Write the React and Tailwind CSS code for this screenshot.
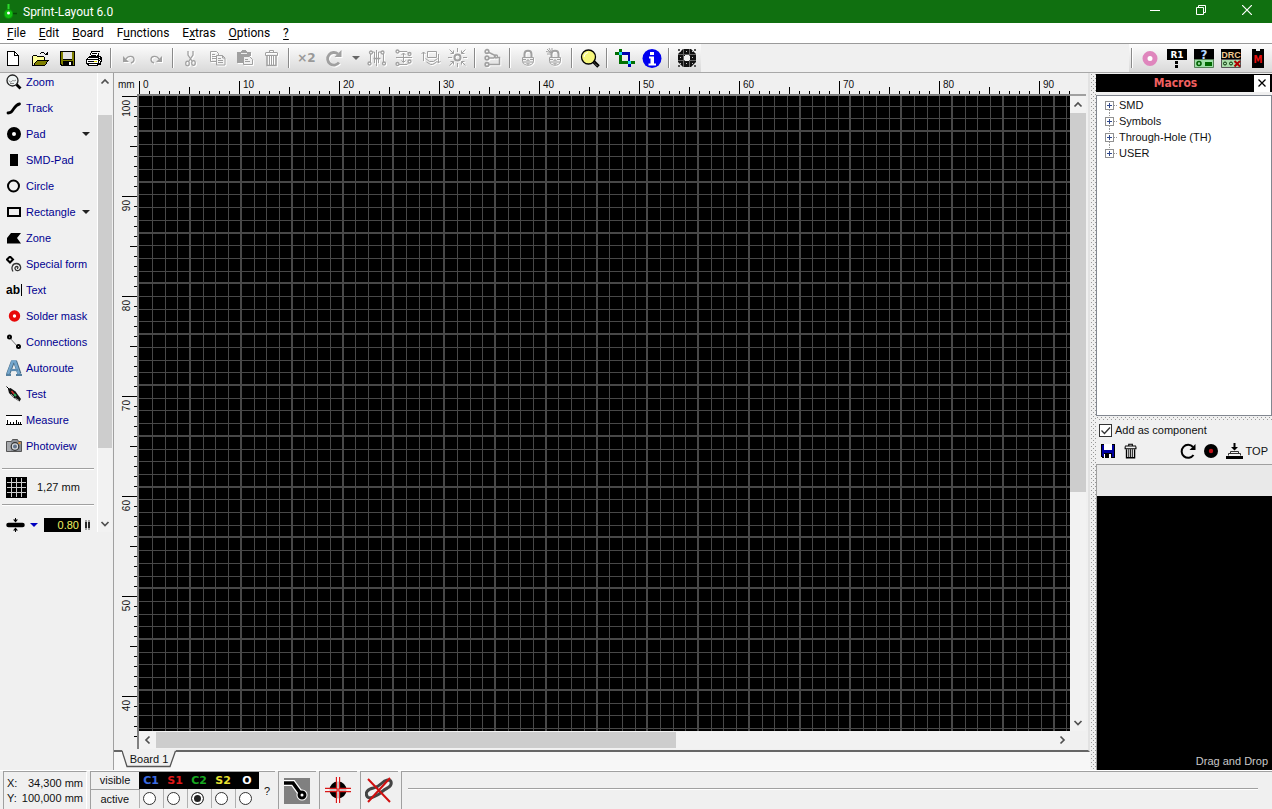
import React, { useLayoutEffect, useRef, useState } from "react";

const range = (n) => Array.from({ length: Math.max(0, n) }, (_, i) => i);

/* Measures an element so that the rulers draw only the marks that fit. */
function useSize() {
  const ref = useRef(null);
  const [size, setSize] = useState({ w: 0, h: 0 });
  useLayoutEffect(() => {
    const el = ref.current;
    const read = () => setSize({ w: el.clientWidth, h: el.clientHeight });
    read();
    const watcher = new ResizeObserver(read);
    watcher.observe(el);
    return () => watcher.disconnect();
  }, []);
  return [ref, size];
}

function Svg({ w = 20, h = 20, vw, vh, crisp, children, className = "" }) {
  return (
    <svg
      width={w}
      height={h}
      viewBox={`0 0 ${vw || w} ${vh || h}`}
      shapeRendering={crisp ? "crispEdges" : "auto"}
      className={`shrink-0 ${className}`}
      fill="none"
      stroke="none"
      aria-hidden="true"
    >
      {children}
    </svg>
  );
}

/* A disabled tool: grey strokes with a white edge below and to the right. */
function Ghost({ children }) {
  return (
    <Svg>
      <g transform="translate(1 1)" stroke="#ffffff" color="#ffffff">{children}</g>
      <g stroke="#a0a0a0" color="#a0a0a0">{children}</g>
    </Svg>
  );
}

const Solid = (p) => <path fill="currentColor" stroke="none" {...p} />;

/* ---------- toolbar icons ---------- */

const NewIcon = () => (
  <Svg crisp>
    <path d="M4 3h8l4 4v11H4z" fill="#fff" />
    <path d="M4 3h7v1H5v13h10V8h1v10H4zM11 3h1v1h1v1h1v1h1v1h1v1h-5zM12 5v2h2V6h-1V5z" fill="#000" />
  </Svg>
);
const OpenIcon = () => (
  <Svg crisp>
    <path d="M3 8h4l1 1h6v3H7l-4 5z" fill="#ffff99" />
    <path d="M7 12h11l-4 6H3z" fill="#808000" />
    <path d="M3 7h4v1H3zM2 8h1v10H2zM7 8h1v1H7zM8 8h6v1H8zM14 9h1v3h-1zM7 12h12v1H7zM6 13h1v1H6zM5 14h1v1H5zM4 15h1v2H4zM3 17h12v1H3zM17 13h1v1h-1zM16 14h1v2h-1zM15 16h1v1h-1zM11 4h3v1h-3zM10 5h1v1h-1zM14 5h1v1h-1zM15 6h3v1h-3zM17 4h1v3h-1zM16 5h1v1h-1z" fill="#000" />
  </Svg>
);
const SaveIcon = () => (
  <Svg crisp>
    <path d="M3 3h15v15H4l-1-1z" fill="#000" />
    <path d="M4 4h2v8h9V4h2v13h-1v-4H6v4H5l-1-1z" fill="#808000" />
    <path d="M6 4h9v7H6z" fill="#e4e4e4" />
    <path d="M12 14h2v3h-2z" fill="#fff" />
  </Svg>
);
const MacroSaveIcon = () => (
  <Svg crisp w={16} h={16}>
    <path d="M1 1h14v14H2l-1-1z" fill="#000" />
    <path d="M2 2h12v12H3l-1-1z" fill="#0000a0" />
    <path d="M4 1h8v6H4z" fill="#fff" />
    <path d="M4 10h8v5H4z" fill="#000" />
    <path d="M9 11h2v4H9zM4 11h1v4H4z" fill="#fff" />
  </Svg>
);
const PrintIcon = () => (
  <Svg crisp>
    <path d="M7 3h9v1h-1v4h2v1h1v5h-1v3h-3v1H4v-1H3v-1H2v-5h1v-1h1V9h1V8h1V5h1z" fill="#000" />
    <path d="M8 4h7l-2 4H6zM4 10h10v1H4zM3 12h11v3H3zM5 16h8v1H5z" fill="#fff" />
    <path d="M8 5h5v1H8zM7 7h5v1H7zM4 13h9v1H4z" fill="#000" />
    <path d="M10 13h3v1h-3z" fill="#dede00" />
    <path d="M15 11h1v1h-1zM16 12h1v1h-1zM15 13h1v2h-1zM15 9h1v1h-1z" fill="#fff" />
  </Svg>
);
const UndoIcon = () => (
  <Ghost>
    <Solid d="M4 8v6h6z" />
    <path d="M7 11c2-3.500 8-3.500 8 .5 0 2-1 3-3 3.500" strokeWidth="1.300" />
  </Ghost>
);
const RedoIcon = () => (
  <Ghost>
    <Solid d="M16 8v6h-6z" />
    <path d="M13 11c-2-3.500-8-3.500-8 .5 0 2 1 3 3 3.500" strokeWidth="1.300" />
  </Ghost>
);
const CutIcon = () => (
  <Ghost>
    <path d="M7 3v4l4 6M12 3v4L8 13" strokeWidth="1.300" />
    <ellipse cx="6.500" cy="15.500" rx="1.800" ry="2.300" strokeWidth="1.200" />
    <ellipse cx="12.500" cy="15" rx="1.800" ry="2.300" strokeWidth="1.200" />
  </Ghost>
);
const CopyIcon = () => (
  <Ghost>
    <path d="M2.500 3.500h6l2 2v8h-8zM4 6.500h3M4 8.500h4M4 10.500h4" />
    <path d="M8.500 7.500h6l2.500 2.500v7h-8.500z" fill="#f4f4f4" />
    <path d="M14.500 7.500V10H17M10 10.500h3M10 12.500h5M10 14.500h5" />
  </Ghost>
);
const PasteIcon = () => (
  <Ghost>
    <Solid d="M2 4h4V3h1V2h4v1h1v1h4v4h-6v7H2z" />
    <path d="M6 5.500h6" stroke="#eee" />
    <path d="M8.500 8.500h6l3 3v5h-9z" fill="#f0f0f0" />
    <path d="M10 11.500h3M10 13.500h5" />
  </Ghost>
);
const Trash = () => (
  <>
    <path d="M3.500 4.500h12M7.500 4V2.500h4V4M3.500 5v2.500h12V5" />
    <path d="M5 8v9.500h9V8" strokeWidth="1.500" />
    <path d="M7.500 8v9M9.500 8v9M11.500 8v9" strokeWidth="1" />
  </>
);
const RotateGhost = () => (
  <Ghost>
    <path d="M15 14.500A6.300 6.300 0 1 1 14 6" strokeWidth="2.800" />
    <Solid d="M10.500 9l7-7v7z" />
  </Ghost>
);
const MirrorH = () => (
  <Ghost>
    <path d="M9.500 2v16M3.500 6v8M5.500 4h2v11M16.500 6v8M14 4h-2.500v11" />
    <path d="M6.500 10.500h7" strokeWidth="1.500" />
    <circle cx="2.500" cy="15.500" r="1.500" strokeWidth="1.300" />
    <circle cx="4" cy="4.500" r="1.500" strokeWidth="1.300" />
    <circle cx="15.500" cy="4.500" r="1.500" strokeWidth="1.300" />
    <circle cx="17" cy="15.500" r="1.500" strokeWidth="1.300" />
  </Ghost>
);
const MirrorV = () => (
  <Ghost>
    <path d="M2 9.500h16" />
    <path d="M5 3.500h8l2 2M5 16.500h8l2-2M9.500 5v9M7.500 7L9.500 5l2 2M7.500 12.500l2 2 2-2" />
    <circle cx="3.500" cy="3.500" r="1.500" strokeWidth="1.300" />
    <circle cx="15.500" cy="6" r="1.500" strokeWidth="1.300" />
    <circle cx="3.500" cy="16" r="1.500" strokeWidth="1.300" />
    <circle cx="15.500" cy="13.500" r="1.500" strokeWidth="1.300" />
  </Ghost>
);
const SwapSide = () => (
  <Ghost>
    <path d="M6.500 3.500h9v6h-9zM2.500 13V4M.5 6l2-2 2 2M17.500 6v9M15.500 13l2 2 2-2" />
    <path d="M4.500 10.500l4 3h4l4-3M5.500 14l4 2.500h2l4-2.500" />
  </Ghost>
);
const SnapGrid = () => (
  <Ghost>
    <circle cx="9.500" cy="9.500" r="3" strokeWidth="2" />
    <path d="M9.500 0v4M9.500 15v4M0 9.500h4M15 9.500h4M1.500 1.500l4 4M17.500 1.500l-4 4M1.500 17.500l4-4M17.500 17.500l-4-4M2.500 5.500h3v-3M16.500 5.500h-3v-3M2.500 13.500h3v3M16.500 13.500h-3v3" />
  </Ghost>
);
const NetGhost = () => (
  <Ghost>
    <path d="M5 4l8 4M5 10h5.500l2-1.500M5 16.500h11.500V9.500H14" strokeWidth="1.500" />
    <circle cx="4" cy="3.500" r="1.800" strokeWidth="1.700" />
    <circle cx="4" cy="10" r="1.800" strokeWidth="1.700" />
    <circle cx="4" cy="16.500" r="1.800" strokeWidth="1.700" />
    <circle cx="13" cy="8.500" r="1.500" strokeWidth="1.500" />
  </Ghost>
);
const LockGhost = ({ rays }) => (
  <Ghost>
    <path d="M6.500 9V6c0-4.500 7-4.500 7 0v3" strokeWidth="2" />
    <path d="M4.500 9.500h11v4c-1 5-10 5-11 0z" fill="#f2f2f2" />
    <path d="M5 11.500h3M12 11.500h3M5 14h3M12 14h3M9 12h2v4H9z" />
    {rays && <path d="M2 1l4 4M2 6h4M7 0v4M1 3.500l5 1M4 0l2 4" />}
  </Ghost>
);
const MagnifierIcon = () => (
  <Svg>
    <path d="M12.500 12.500l6 6" stroke="#000" strokeWidth="3.500" />
    <path d="M14 14.500l4 4" stroke="#bbb" strokeWidth="1" strokeDasharray="1 1" />
    <circle cx="8.500" cy="9" r="7" fill="#f6f67c" stroke="#000" strokeWidth="1.300" />
    <path d="M4 9a5 5 0 0 1 4-4.500" stroke="#fff" strokeWidth="1" />
  </Svg>
);
const CropIcon = () => (
  <Svg crisp>
    <path d="M4 1h3v12h6v3H4z" fill="#007000" />
    <path d="M0 4h4v3H0zM16 13h4v3h-4z" fill="#007000" />
    <path d="M7 4h8v9h-2V7H7zM13 16h3v3h-3z" fill="#0000b0" />
    <path d="M4 4h3v3H4zM13 13h3v3h-3z" fill="#20d8f0" />
  </Svg>
);
const InfoIcon = () => (
  <Svg>
    <circle cx="10" cy="10.500" r="9.500" fill="#0000f0" />
    <path d="M8 4h4v3H8zM7 8.500h5v7h2v2H6.500v-2h2v-5H7z" fill="#fff" />
  </Svg>
);
const MeshIcon = () => (
  <Svg>
    <path d="M6 1h8l5 5v8l-5 5H6l-5-5V6z" fill="#111" />
    <path d="M1 1h2v2H1zM17 1h2v2h-2zM1 17h2v2H1zM17 17h2v2h-2z" fill="#555" />
    <g stroke="#c8c8c8" strokeWidth="1" strokeDasharray="1 2" shapeRendering="crispEdges">
      {[3, 6, 9, 12, 15].map((v) => (
        <path key={v} d={`M3 ${v}.500h14`} />
      ))}
    </g>
    <path d="M1 6.500h18M1 12.500h18M6.500 1v18M12.500 1v18" stroke="#666" strokeWidth="1" shapeRendering="crispEdges" />
    <path d="M8 7h4v1h1v4h-1v1H8v-1H7V8h1z" fill="#f4f4f4" />
  </Svg>
);

/* ---------- right toolbar icons ---------- */

const PinkPad = () => (
  <Svg>
    <circle cx="10" cy="10.500" r="5" stroke="#df86bd" strokeWidth="5" fill="#fff" />
  </Svg>
);
const R1Icon = () => (
  <Svg>
    <path d="M0 1h20v11H0z" fill="#000" />
    <text x="10" y="10" textAnchor="middle" fontSize="9" fontWeight="700" fill="#fff" className="font-[DejaVu_Sans]">R1</text>
    <path d="M8 13h3v3H8zM8 17h3v3H8z" fill="#000" />
  </Svg>
);
const QueryIcon = () => (
  <Svg>
    <path d="M0 1h20v11H0z" fill="#000" />
    <text x="10" y="11" textAnchor="middle" fontSize="12" fontWeight="700" fill="#b8d8ff" className="font-[DejaVu_Sans]">?</text>
    <path d="M.5 11.500h19v8H.5z" fill="#9fe0a8" stroke="#568058" />
    <circle cx="5" cy="15.500" r="2" stroke="#006000" strokeWidth="1.600" />
    <path d="M11 14h7v4h-7z" fill="#006a00" />
  </Svg>
);
const DrcIcon = () => (
  <Svg>
    <path d="M0 1h20v11H0z" fill="#000" />
    <text x="10" y="10" textAnchor="middle" fontSize="9" fontWeight="700" fill="#efc890" className="font-[Liberation_Sans]">DRC</text>
    <path d="M.5 11.500h19v8H.5z" fill="#a8dca8" stroke="#555" />
    <circle cx="4" cy="15.500" r="1.500" stroke="#003000" />
    <circle cx="10" cy="15.500" r="1.500" stroke="#003000" />
    <path d="M13.500 13l5.500 5.500M19 13l-5.500 5.500" stroke="#b00000" strokeWidth="2" />
  </Svg>
);
const MacroIcon = () => (
  <Svg>
    <path d="M4 1h4v2h4V1h4v19H4z" fill="#000" />
    <text x="10" y="15" textAnchor="middle" fontSize="10" fontWeight="700" fill="#e81010" className="font-[DejaVu_Sans_Condensed]">M</text>
  </Svg>
);

/* ---------- left tool icons (16 x 16) ---------- */

const T = (p) => <Svg w={16} h={16} {...p} />;
const toolIcons = {
  Zoom: (
    <T>
      <path d="M10 10l4.500 4.500" stroke="#000" strokeWidth="2.800" />
      <circle cx="6.500" cy="6.500" r="5.500" fill="#eef3f3" stroke="#222" strokeWidth="1.300" />
      <path d="M3 6.500c1 2 2 2 3 .5s2 1 4-1M4 9.500h4" stroke="#888" />
    </T>
  ),
  Track: <T><path d="M2 13c3 0 3.500-1 5.500-4S10.500 4.500 13.500 4" stroke="#000" strokeWidth="2.800" strokeLinecap="round" strokeLinejoin="round" /></T>,
  Pad: <T><circle cx="8" cy="8" r="4.500" stroke="#000" strokeWidth="5" fill="#fff" /></T>,
  "SMD-Pad": <T crisp><path d="M4 2h8v12H4z" fill="#000" /></T>,
  Circle: <T><circle cx="7.500" cy="8" r="5.500" stroke="#000" strokeWidth="2" /></T>,
  Rectangle: <T crisp><path d="M1 3h14v10H1zM3 5v6h10V5z" fill="#000" fillRule="evenodd" /></T>,
  Zone: <T><path d="M5 3h10l-4 5 4 5.500H1V8z" fill="#000" /></T>,
  "Special form": (
    <T>
      <path d="M4 .5L7 3.500 4 6.500 1 3.500z" stroke="#000" strokeWidth="2" />
      <path d="M7 15.500c-2-3-1-8 3.500-8s5.500 6 2 7-5-4-1.500-4c1.500 0 1 2 0 2" stroke="#333" strokeWidth="1.300" />
    </T>
  ),
  Text: (
    <T>
      <text x="0" y="12" fontSize="12" fontWeight="700" fill="#000" className="font-[Liberation_Sans]">ab</text>
      <path d="M15.500 2v12" stroke="#000" strokeWidth="1" />
    </T>
  ),
  "Solder mask": <T><circle cx="8.500" cy="8" r="3.700" stroke="#e80808" strokeWidth="4" fill="#fff" /></T>,
  Connections: (
    <T>
      <path d="M3 3l9 10" stroke="#777" />
      <circle cx="3.500" cy="3" r="1.500" stroke="#000" strokeWidth="2" fill="#fff" />
      <circle cx="12.500" cy="12.500" r="1.500" stroke="#000" strokeWidth="2" fill="#fff" />
    </T>
  ),
  Autoroute: (
    <T>
      <path d="M2 14.500L6.500 2.500l3 0L13.500 14" stroke="#466a84" strokeWidth="4" />
      <path d="M2 14L6.500 1.500h2.500L13 14" stroke="#74a6cc" strokeWidth="2.600" />
      <path d="M4 10h8" stroke="#5d8cb0" strokeWidth="2.200" />
      <path d="M0 14h5v2H0zM10 14h6v2h-6z" fill="#5580a0" />
    </T>
  ),
  Test: (
    <T>
      <path d="M.5.5l3 3" stroke="#000" />
      <path d="M2 3l2.500-1 5 3.500L15 13l-1.500 2.500L8 12 3 7z" fill="#111" />
      <path d="M5.500 5l2.500 3" stroke="#d03030" strokeWidth="1.500" />
      <path d="M8 8l2 2" stroke="#30b060" strokeWidth="2" />
      <path d="M9 12l4 2.500M5 8l3 3" stroke="#999" />
    </T>
  ),
  Measure: (
    <T crisp>
      <path d="M0 3h16v10H0z" fill="#fff" />
      <path d="M0 3h16v1H0zM0 12h16v1H0zM1 8h1v4H1zM4 10h1v2H4zM7 10h1v2H7zM10 8h1v4h-1zM12 10h1v2h-1zM14 10h1v2h-1z" fill="#000" />
    </T>
  ),
  Photoview: (
    <T>
      <path d="M.5 3.500h5l1-2h5l1 2h3v10H.5z" fill="#8b8f96" stroke="#555" />
      <path d="M2 4v9M4 4v9" stroke="#c4c4c4" />
      <circle cx="9" cy="8.500" r="3.800" fill="#d7dade" stroke="#333" strokeWidth="1.200" />
      <circle cx="9" cy="8.500" r="2" fill="#64748a" />
      <path d="M12.500 4h2v2h-2z" fill="#e09030" />
    </T>
  ),
};

const tools = [
  ["Zoom"], ["Track"], ["Pad", true], ["SMD-Pad"], ["Circle"], ["Rectangle", true], ["Zone"], ["Special form"],
  ["Text"], ["Solder mask"], ["Connections"], ["Autoroute"], ["Test"], ["Measure"], ["Photoview"],
];

const Caret = ({ color = "#222" }) => (
  <Svg w={8} h={4}><path d="M0 0h8L4 4z" fill={color} /></Svg>
);

const Chevron = ({ dir }) => {
  const d = { up: "M1.500 6.500L5 3l3.500 3.500", down: "M1.500 3l3.500 3.500L8.500 3", left: "M6.500 1.500L3 5l3.500 3.500", right: "M3.500 1.500L7 5 3.500 8.500" }[dir];
  return <Svg w={10} h={10}><path d={d} stroke="#505050" strokeWidth="1.700" /></Svg>;
};

function ScrollButton({ dir, label, className = "" }) {
  return (
    <button type="button" aria-label={label} className={`flex shrink-0 items-center justify-center ${className}`}>
      <Chevron dir={dir} />
    </button>
  );
}

/* ---------- frame ---------- */

function TitleBar() {
  return (
    <header className="flex h-[23px] shrink-0 items-center bg-[#107010] text-white">
      <Svg w={20} h={22} className="mr-[3px]">
        <path d="M8.500 3v6" stroke="#2cdc2c" strokeWidth="2" />
        <circle cx="8.500" cy="13" r="4.500" fill="#10c010" stroke="#0a8a0a" />
        <circle cx="8.500" cy="12" r="1.500" fill="#fff" />
        <path d="M13 12.500h4" stroke="#064806" strokeWidth="1.500" />
      </Svg>
      <h1 className="font-[Roboto,sans-serif] text-[12px]">Sprint-Layout 6.0</h1>
      <div className="ml-auto flex h-full gap-[1px] pr-[3px] pb-[3px]">
        <button type="button" aria-label="Minimize" className="flex w-[45px] items-center justify-center">
          <Svg w={10} h={10} crisp><path d="M0 5h10v1H0z" fill="#fff" /></Svg>
        </button>
        <button type="button" aria-label="Restore" className="flex w-[45px] items-center justify-center">
          <Svg w={10} h={10}><path d="M.5 2.500h7v7h-7zM2.500 2V.5h7v7H8" stroke="#fff" /></Svg>
        </button>
        <button type="button" aria-label="Close" className="flex w-[45px] items-center justify-center">
          <Svg w={10} h={10}><path d="M0 0l10 10M10 0L0 10" stroke="#fff" strokeWidth="1.200" /></Svg>
        </button>
      </div>
    </header>
  );
}

const menus = [["", "F", "ile"], ["", "E", "dit"], ["", "B", "oard"], ["F", "u", "nctions"], ["E", "x", "tras"], ["", "O", "ptions"], ["", "?", ""]];

function MenuBar() {
  return (
    <nav className="flex h-5 shrink-0 items-center gap-[13px] bg-white pl-[7px] font-[Roboto,sans-serif] text-[12px] leading-5 text-black">
      {menus.map(([a, b, c]) => (
        <button type="button" key={a + b + c}>{a}<span className="underline underline-offset-2">{b}</span>{c}</button>
      ))}
    </nav>
  );
}

const Sep = () => (
  <span className="flex w-2 shrink-0 py-1 pl-[2px]">
    <span className="w-[2px] border-r border-l border-r-white border-l-[#8a8a8a]" />
  </span>
);

const Tool = ({ label, children, off }) => (
  <button type="button" aria-label={label} disabled={off} className="flex w-[27px] shrink-0 items-center justify-center pr-[2px]">
    {children}
  </button>
);

const barClass = "flex bg-linear-to-b from-[#fdfdfd] to-[#d9d9d9]";

function Toolbar() {
  return (
    <div className="flex h-[30px] shrink-0 justify-between border-t border-b border-t-[#9a9a9a] border-b-[#a8a8a8] bg-[#f0f0f0]">
      <div className={barClass}>
        <Tool label="New"><NewIcon /></Tool>
        <Tool label="Open"><OpenIcon /></Tool>
        <Tool label="Save"><SaveIcon /></Tool>
        <Tool label="Print"><PrintIcon /></Tool>
        <Sep />
        <Tool label="Undo" off><UndoIcon /></Tool>
        <Tool label="Redo" off><RedoIcon /></Tool>
        <Sep />
        <Tool label="Cut" off><CutIcon /></Tool>
        <Tool label="Copy" off><CopyIcon /></Tool>
        <Tool label="Paste" off><PasteIcon /></Tool>
        <Tool label="Delete" off><Ghost><Trash /></Ghost></Tool>
        <Sep />
        <button type="button" disabled className="w-[27px] shrink-0 pr-[2px] text-center font-[DejaVu_Sans,sans-serif] text-[12px] font-bold text-[#999]">×2</button>
        <Tool label="Rotate" off><RotateGhost /></Tool>
        <button type="button" aria-label="Rotation angle" className="flex w-4 items-center justify-center"><Caret color="#666" /></button>
        <Tool label="Mirror horizontal" off><MirrorH /></Tool>
        <Tool label="Mirror vertical" off><MirrorV /></Tool>
        <Tool label="Change board side" off><SwapSide /></Tool>
        <Tool label="Snap to grid" off><SnapGrid /></Tool>
        <Sep />
        <Tool label="Group" off><NetGhost /></Tool>
        <Sep />
        <Tool label="Lock" off><LockGhost /></Tool>
        <Tool label="Unlock" off><LockGhost rays /></Tool>
        <Sep />
        <Tool label="Zoom"><MagnifierIcon /></Tool>
        <Sep />
        <Tool label="Crop"><CropIcon /></Tool>
        <Tool label="Info"><InfoIcon /></Tool>
        <Sep />
        <Tool label="Ground plane"><MeshIcon /></Tool>
      </div>
      <div className={barClass}>
        <Sep />
        <Tool label="Solder mask"><PinkPad /></Tool>
        <Tool label="Components"><R1Icon /></Tool>
        <Tool label="Selection properties"><QueryIcon /></Tool>
        <Tool label="Design rule check"><DrcIcon /></Tool>
        <Tool label="Macros"><MacroIcon /></Tool>
      </div>
    </div>
  );
}

function Sidebar() {
  return (
    <aside className="flex shrink-0 items-start border-r border-r-[#a0a0a0]">
      <div className="w-[97px]">
        <ul className="flex flex-col gap-2">
          {tools.map(([name, more]) => (
            <li key={name} className="flex h-[18px] items-center justify-between pr-[7px]">
              <button type="button" className="flex items-center gap-1 pl-[6px] text-[#000090]">
                {toolIcons[name]}
                <span className="whitespace-nowrap">{name}</span>
              </button>
              {more && <button type="button" aria-label={`${name} shapes`} className="h-full"><Caret /></button>}
            </li>
          ))}
        </ul>
        <div className="mt-[13px] mr-[3px] ml-[2px] border-t border-b border-t-[#a0a0a0] border-b-white" />
        <button type="button" className="flex h-[34px] items-center gap-[10px] pl-[6px]">
          <Svg w={21} h={21} crisp>
            <path d="M0 0h21v21H0z" fill="#000" />
            <path d="M1 5h19v1H1zM1 10h19v1H1zM1 15h19v1H1zM5 1h1v19H5zM10 1h1v19h-1zM15 1h1v19h-1z" fill="#ccc" />
          </Svg>
          1,27 mm
        </button>
        <div className="mr-[3px] ml-[2px] border-t border-b border-t-[#a0a0a0] border-b-white" />
        <div className="mt-[11px] flex items-center pl-[6px]">
          <Svg w={20} h={16}>
            <path d="M2.500 8h14" stroke="#000" strokeWidth="4.500" strokeLinecap="round" />
            <path d="M9.500 1v3M9.500 12v3" stroke="#000" />
            <path d="M7 2.500h5l-2.500 3zM7 13.500h5l-2.500-3z" fill="#000" />
          </Svg>
          <button type="button" aria-label="Track width presets" className="ml-1"><Caret color="#0000c0" /></button>
          <input aria-label="Track width" defaultValue="0.80" className="ml-[6px] h-[14px] w-[37px] bg-black pr-[2px] text-right text-[#f0f060]" />
          <Svg w={7} h={12} className="ml-[3px]">
            <path d="M2 1v10M5 1v10" stroke="#888" strokeWidth="1.500" />
            <path d="M2 3v6M5 3v6" stroke="#000" strokeWidth="1.500" />
          </Svg>
        </div>
      </div>
      <div className="flex h-[459px] w-4 flex-col border-r border-l border-r-[#f0f0f0] border-l-white bg-[#f2f2f2]">
        <ScrollButton dir="up" label="Scroll tools up" className="h-[18px]" />
        <div className="mt-6 flex-1 bg-[#cdcdcd]" />
        <div className="h-[67px]" />
        <ScrollButton dir="down" label="Scroll tools down" className="h-[17px]" />
      </div>
    </aside>
  );
}

const tickLen = (i) => (i % 10 === 0 ? 13 : i % 5 === 0 ? 7 : 3);

function TopRuler() {
  const [ref, { w }] = useSize();
  return (
    <div ref={ref} className="min-w-0">
      <svg className="block h-full w-full" aria-hidden="true">
        {range(Math.floor((w - 2) / 10) + 1).map((i) => (
          <rect key={i} x={2 + i * 10} y={21 - tickLen(i)} width="1" height={tickLen(i)} fill="#000" />
        ))}
        {range(Math.ceil((w - 24) / 100)).map((k) => (
          <text key={k} x={6 + k * 100} y="15" fontSize="10" fill="#111">{k * 10}</text>
        ))}
      </svg>
    </div>
  );
}

function SideRuler() {
  const [ref, { h }] = useSize();
  const len = (i) => (i % 10 === 0 ? 15 : i % 5 === 0 ? 7 : 3);
  return (
    <div ref={ref} className="row-span-2 min-h-0">
      <svg className="block h-full w-full" aria-hidden="true">
        {range(Math.floor((h - 12) / 10) + 1).map((i) => (
          <rect key={i} x={23 - len(i)} y={2 + i * 10} width={len(i)} height="1" fill="#000" />
        ))}
        {range(Math.ceil((h - 26) / 100)).map((k) => {
          const y = 6 + k * 100;
          return (
            <text key={k} x="16" y={y} fontSize="10" fill="#111" textAnchor="end" transform={`rotate(-90 16 ${y})`}>{100 - k * 10}</text>
          );
        })}
      </svg>
    </div>
  );
}

function Board() {
  const pitch = 12.7;
  return (
    <svg className="block h-full w-full bg-black" shapeRendering="crispEdges" role="img" aria-label="Board 1 grid">
      {range(240).map((i) => {
        const major = (i + 1) % 4 === 0;
        const p = Math.round(0.3 + (i + 1) * pitch);
        return <rect key={i} x={major ? p - 1 : p} y="0" width={major ? 2 : 1} height="100%" fill="#484848" />;
      })}
      {range(160).map((i) => {
        const major = i % 4 === 2;
        const p = Math.round(9.6 + i * pitch);
        return <rect key={i} x="0" y={major ? p - 1 : p} width="100%" height={major ? 2 : 1} fill="#484848" />;
      })}
    </svg>
  );
}

function Workspace() {
  return (
    <main className="flex min-w-0 flex-1 flex-col">
      <div className="grid min-h-0 flex-1 grid-cols-[23px_minmax(0,1fr)_16px] grid-rows-[21px_minmax(0,1fr)_18px] border-r-2 border-b-2 border-r-[#e2e2e2] border-b-[#666] pr-[2px] pb-[1px]">
        <div className="pt-1 pl-1 text-[10px] leading-4">mm</div>
        <TopRuler />
        <div />
        <SideRuler />
        <div className="min-h-0 border-t-2 border-l-2 border-[#808080]"><Board /></div>
        <div className="flex min-h-0 flex-col border-t-2 border-t-[#a0a0a0] bg-[#f2f2f2]">
          <ScrollButton dir="up" label="Scroll up" className="h-[17px]" />
          <div className="min-h-0 flex-1"><div className="h-[63%] bg-[#cdcdcd]" /></div>
          <ScrollButton dir="down" label="Scroll down" className="h-[17px]" />
        </div>
        <div className="flex border-l-2 border-l-[#808080] bg-[#f2f2f2] pt-[1px] pb-[1px]">
          <ScrollButton dir="left" label="Scroll left" className="w-[17px]" />
          <div className="flex-1"><div className="h-full w-[58%] bg-[#cdcdcd]" /></div>
          <ScrollButton dir="right" label="Scroll right" className="w-[17px]" />
        </div>
        <div />
      </div>
      <div className="flex h-[18px] shrink-0 bg-[#f7f7f7] pl-[8px]">
        <button type="button" className="relative -mt-[2px] h-[18px] w-[54px]">
          <svg className="absolute inset-0" width="54" height="18" aria-hidden="true">
            <path d="M0 0h54l-6 16.500H5z" fill="#f0f0f0" />
            <path d="M0 1l5 15.500h43L53.500 1" fill="none" stroke="#555" strokeWidth="1.300" />
          </svg>
          <span className="relative whitespace-nowrap">Board 1</span>
        </button>
      </div>
    </main>
  );
}

const dots =
  "shrink-0 bg-[conic-gradient(from_270deg_at_1px_1px,#999_90deg,transparent_0deg),conic-gradient(from_270deg_at_1px_1px,#999_90deg,transparent_0deg)] bg-[length:4px_4px] bg-[position:1px_1px,3px_3px]";

function Macros() {
  return (
    <aside className="flex w-44 shrink-0 flex-col">
      <div className="mt-[1px] flex h-[18px] shrink-0 items-center bg-black pr-[2px]">
        <h2 className="flex-1 pl-[1px] text-center font-[DejaVu_Sans_Condensed,sans-serif] text-[12px] leading-4 font-bold text-[#f06060]">Macros</h2>
        <button type="button" aria-label="Close macros" className="flex h-[17px] w-4 items-center justify-center bg-white">
          <Svg w={8} h={8}><path d="M.5 .5l7 7M7.500 .5l-7 7" stroke="#000" strokeWidth="1.300" /></Svg>
        </button>
      </div>
      <div className="mt-[3px] min-h-0 flex-1 border border-[#828790] bg-white pt-[1px] pl-2">
        <ul>
          {["SMD", "Symbols", "Through-Hole (TH)", "USER"].map((name, i) => (
            <li key={name}>
              <button type="button" className="flex h-4 items-center">
                <Svg w={14} h={16} crisp>
                  {i < 3 && <path d="M4.500 13v3" stroke="#999" strokeDasharray="1 1" />}
                  {i > 0 && <path d="M4.500 0v4" stroke="#999" strokeDasharray="1 1" />}
                  <path d="M0 4h9v9H0z" fill="#919191" />
                  <path d="M1 5h7v7H1z" fill="#fff" />
                  <path d="M2 8h5v1H2zM4 6h1v5H4z" fill="#30488c" />
                  <path d="M9 8.500h4" stroke="#999" strokeDasharray="1 1" />
                </Svg>
                {name}
              </button>
            </li>
          ))}
        </ul>
      </div>
      <div className={`h-[5px] ${dots}`} />
      <label className="flex h-[18px] shrink-0 items-center gap-[3px] pl-[3px]">
        <span className="relative flex size-[13px]">
          <input type="checkbox" defaultChecked className="peer size-[13px] appearance-none border border-[#333] bg-white" />
          <svg className="pointer-events-none absolute inset-0 hidden peer-checked:block" width="13" height="13" aria-hidden="true">
            <path d="M2.500 6.500l3 3 5.500-6" fill="none" stroke="#333" strokeWidth="1.300" />
          </svg>
        </span>
        Add as component
      </label>
      <div className="flex h-[25px] shrink-0 items-center gap-1 pr-1 pb-[2px] pl-1">
        <button type="button" aria-label="Save macro"><MacroSaveIcon /></button>
        <button type="button" aria-label="Delete macro" className="ml-[2px]">
          <Svg w={18} h={18} vw={20} vh={20}><g stroke="#000" strokeWidth="1.200"><Trash /></g></Svg>
        </button>
        <button type="button" aria-label="Rotate macro" className="ml-auto">
          <Svg w={18} h={18}>
            <path d="M14.500 13a6.500 6.500 0 1 1-.5-8" stroke="#000" strokeWidth="2" />
            <path d="M10.500 8h6V2z" fill="#000" />
          </Svg>
        </button>
        <button type="button" aria-label="Anchor" className="ml-[2px]">
          <Svg w={16} h={16}>
            <circle cx="8" cy="8" r="7" fill="#000" />
            <circle cx="8" cy="8" r="2.200" fill="#c01018" />
          </Svg>
        </button>
        <button type="button" className="ml-[3px] flex items-center gap-[3px]">
          <Svg w={17} h={16}>
            <path d="M0 13h17v3H0zM7.500 0h2v4H12L8.500 7.500 5 4h2.500z" fill="#000" />
            <path d="M2.500 12.500v-2h12v2M4.500 10v-1.500h8V10" stroke="#333" />
          </Svg>
          TOP
        </button>
      </div>
      <div className="h-8 shrink-0 border-t border-l border-[#a0a0a0] bg-[#e9e9e9]" />
      <div className="flex h-[274px] shrink-0 items-end justify-end border-l border-[#a0a0a0] bg-black pr-1 pb-[1px] text-[#c8c8c8]">Drag and Drop</div>
    </aside>
  );
}

const layers = [["C1", "text-[#3c6ce0]"], ["S1", "text-[#e01818]"], ["C2", "text-[#18a820]"], ["S2", "text-[#e8e030]"], ["O", "text-white"]];
const cell = "shrink-0 border-t border-l border-[#a0a0a0]";

function StatusBar() {
  return (
    <footer className="flex h-[39px] shrink-0 border-t border-white bg-[#f0f0f0] pl-[3px]">
      <dl className={`${cell} grid w-[84px] grid-cols-[auto_1fr] content-start border-r border-r-white pt-1 pr-[3px] pl-[3px] leading-[15px]`}>
        <dt>X:</dt><dd className="text-right">34,300 mm</dd>
        <dt>Y:</dt><dd className="text-right">100,000 mm</dd>
      </dl>
      <div className={`${cell} ml-[3px] flex w-[185px] items-start`}>
        <table className="border-collapse">
          <tbody>
            <tr className="h-[17px]">
              <th scope="row" className="w-12 p-0 font-normal">visible</th>
              {layers.map(([n, c]) => (
                <td key={n} className="w-6 bg-black p-0 text-center">
                  <button type="button" className={`block w-full font-[DejaVu_Sans,sans-serif] text-[11px] leading-4 font-bold ${c}`}>{n}</button>
                </td>
              ))}
            </tr>
            <tr className="h-[19px]">
              <th scope="row" className="border-t border-t-[#a0a0a0] p-0 font-normal">active</th>
              {layers.map(([n]) => (
                <td key={n} className="border-l border-l-[#b0b0b0] p-0">
                  <input type="radio" name="layer" aria-label={`Active layer ${n}`} defaultChecked={n === "C2"} className="ml-[3px] block size-[13px] appearance-none rounded-full border border-[#333] bg-white checked:bg-[#222] checked:shadow-[inset_0_0_0_2px_white]" />
                </td>
              ))}
            </tr>
          </tbody>
        </table>
        <button type="button" className="flex-1 self-center">?</button>
      </div>
      <button type="button" aria-label="Track mode" className={`${cell} ml-[3px] flex w-[38px] items-center justify-center pr-[2px]`}>
        <Svg w={26} h={26}>
          <path d="M0 0h26v26H0z" fill="#808080" />
          <path d="M0 5h9l8 11" stroke="#fff" strokeWidth="6" />
          <circle cx="18" cy="17" r="5.500" fill="#fff" />
          <path d="M0 5h9l8 11" stroke="#000" strokeWidth="3.500" />
          <circle cx="18" cy="17" r="3" fill="#fff" stroke="#000" strokeWidth="3" />
        </Svg>
      </button>
      <button type="button" aria-label="Capture pads" className={`${cell} ml-[3px] flex w-[38px] items-center justify-center pr-[2px] pb-[2px]`}>
        <Svg w={28} h={28}>
          <circle cx="14" cy="14" r="8.500" fill="#000" />
          <path d="M12.500 1v26M15.500 1v26M1 12.500h26M1 15.500h26" stroke="#d81818" strokeWidth="1.300" />
          <path d="M14 1v26M1 14h26" stroke="#fff" strokeWidth="1.500" />
          <path d="M12 14h4M14 12v4" stroke="#d81818" />
        </Svg>
      </button>
      <button type="button" aria-label="Rubber band" className={`${cell} ml-[3px] flex w-[38px] items-center justify-center pr-[2px] pb-[2px]`}>
        <Svg w={28} h={28}>
          <path d="M2.500 21c-3-4 0-8 6-9 7-1 8-7 14-8 5 0 5 5 0 8-5 2-6 5-10 7s-8 4-10 2z" stroke="#444" strokeWidth="3" />
          <path d="M3 3l22 23M25 2L3 26" stroke="#d01010" strokeWidth="2" />
        </Svg>
      </button>
      <div className={`${cell} ml-[3px] min-w-0 flex-1 shrink border-r-0 pt-4 pr-[14px] pl-[6px]`}>
        <div className="h-[2px] border-t border-b border-t-[#a0a0a0] border-b-white" />
      </div>
    </footer>
  );
}

export default function App() {
  return (
    <div className="flex h-screen flex-col overflow-hidden bg-[#f0f0f0] font-[Liberation_Sans,sans-serif] text-[11px] leading-4 text-[#111]">
      <TitleBar />
      <MenuBar />
      <Toolbar />
      <div className="flex min-h-0 flex-1">
        <Sidebar />
        <Workspace />
        <div className={`w-[6px] ${dots}`} />
        <Macros />
      </div>
      <StatusBar />
    </div>
  );
}
